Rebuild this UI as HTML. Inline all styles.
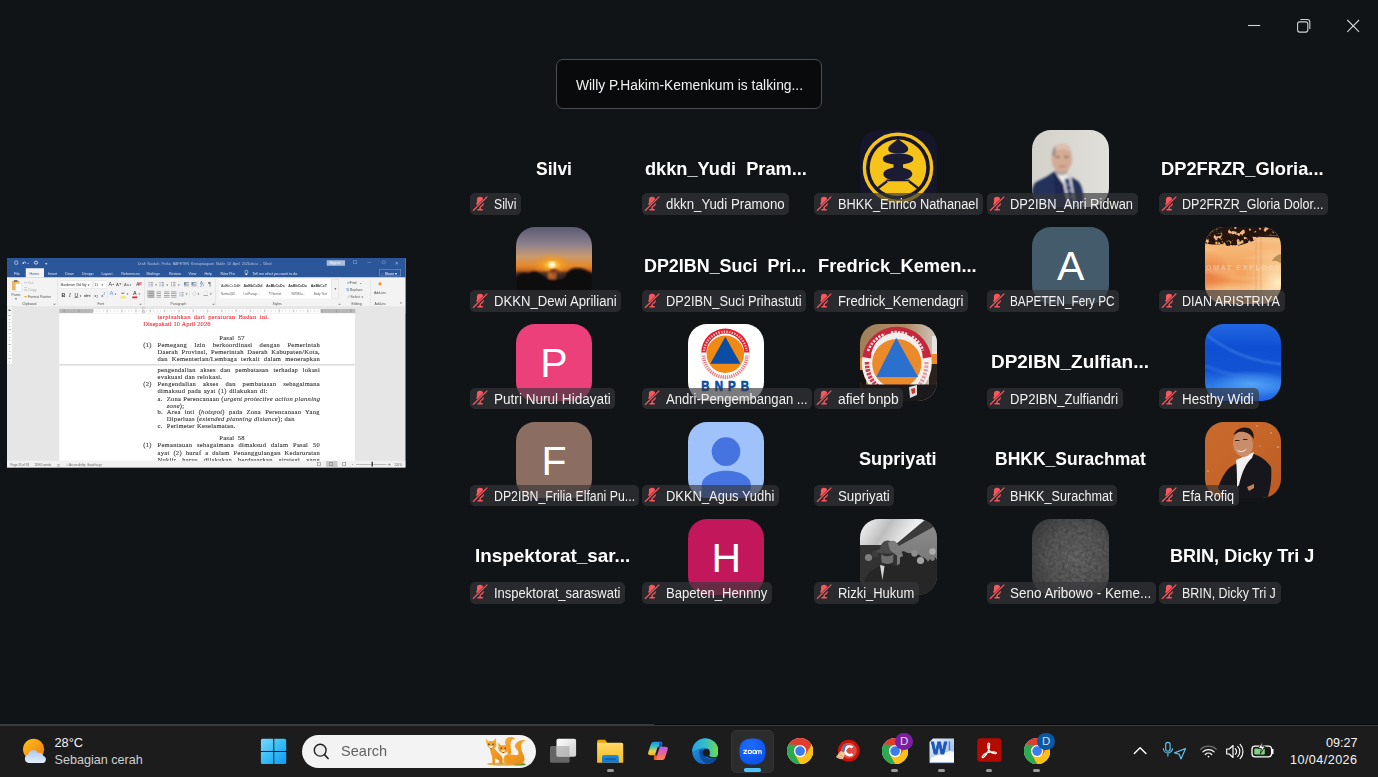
<!DOCTYPE html>
<html><head><meta charset="utf-8"><title>Zoom Meeting</title>
<style>
html,body{margin:0;padding:0}
body{width:1378px;height:777px;overflow:hidden;background:#111417;font-family:"Liberation Sans",sans-serif;position:relative;color:#fff}
.abs{position:absolute}
.av{position:absolute;width:76.500px;height:76.500px;border-radius:19px;overflow:hidden}
.av svg{display:block}
.lb{position:absolute;height:21.7px;border-radius:5px;background:rgba(54,55,57,.66);box-sizing:border-box;white-space:nowrap;overflow:hidden}
.lb .mic{position:absolute;left:0;top:-.5px}
.lb span{position:absolute;left:23.7px;top:0;line-height:22.300px;font-size:14px;color:#f1f1f1;transform-origin:0 50%;white-space:pre}
.nm{position:absolute;height:28px;white-space:nowrap}
.nm span{position:absolute;left:0;top:0;line-height:28px;font-size:18.5px;font-weight:700;color:#fff;transform-origin:0 50%;white-space:pre}
.toast{position:absolute;left:556px;top:59px;width:266px;height:50px;box-sizing:border-box;border:1px solid #4b4d50;border-radius:7px;background:#090a0b}
.toast span{position:absolute;left:18.5px;top:0;line-height:51.600px;font-size:14px;color:#f2f2f2;white-space:pre;transform-origin:0 50%;transform:scaleX(.987)}
</style></head><body>
<!-- window controls -->
<svg class="abs" style="left:1240px;top:10px" width="130" height="30" viewBox="0 0 130 30">
 <path d="M8 15.5h12.2" stroke="#d2d2d2" stroke-width="1.1" fill="none"/>
 <rect x="57.6" y="11.9" width="10.2" height="10.2" rx="2" fill="none" stroke="#d2d2d2" stroke-width="1.1"/>
 <path d="M60.4 9.5h6.8a2.6 2.6 0 0 1 2.6 2.6v6.9" fill="none" stroke="#d2d2d2" stroke-width="1.1"/>
 <path d="M107.3 10l11.8 11.8M119.1 10l-11.8 11.8" stroke="#d2d2d2" stroke-width="1.1" fill="none"/>
</svg>
<div class="toast"><span id="toastt">Willy P.Hakim-Kemenkum is talking...</span></div>
<div id="word" style="position:absolute;left:6.500px;top:257.700px;width:1594px;height:838px;transform:scale(.25);transform-origin:0 0;background:#e6e6e6;overflow:hidden;font-family:'Liberation Sans',sans-serif;color:#444">
<style>#word div,#word span,#word i,#word b{position:absolute;white-space:pre}#word .t{font-size:14.500px;line-height:24px;color:#fff;opacity:.85}#word .r{font-size:14px;line-height:24px;color:#555}#word .ln{font-family:"Liberation Serif",serif;font-size:26px;line-height:30px;color:#222;text-align:justify;text-align-last:justify;white-space:nowrap;letter-spacing:1.200px;font-weight:400;-webkit-text-stroke:.55px #222;opacity:.88}#word .ln i{position:static;font-weight:400}#word .sep{width:2px;background:#d8d8d8}</style>
<div style="left:0;top:0;width:1594px;height:78px;background:#2b569a"></div>
<div style="left:30px;top:11px;width:14px;height:15px;border:2.500px solid #fff;box-sizing:border-box;border-radius:2px"></div>
<div class="t" style="left:58px;top:8px;font-size:20px;opacity:1">&#8630; -</div>
<div style="left:108px;top:11px;width:16px;height:15px;border:3px solid #fff;box-sizing:border-box;border-radius:8px"></div>
<div class="t" style="left:150px;top:9px;font-size:14px">&#9660;</div>
<div class="t" style="left:524px;top:10px;width:534px;text-align:justify;text-align-last:justify;white-space:nowrap;opacity:.62;font-size:14px">Draft Naskah Perka BAPETEN Kesiapsiagaan Nuklir 10 April 2026.docx - Word</div>
<div style="left:1279px;top:9px;width:73px;height:22px;background:#a9bddc"></div><div class="t" style="left:1292px;top:9px;font-size:13.500px;opacity:1">Sign in</div>
<div style="left:1384px;top:10px;width:16px;height:14px;border:2px solid #8ea4cf;box-sizing:border-box"></div>
<div style="left:1442px;top:18px;width:14px;height:2px;background:#8ea4cf"></div>
<div style="left:1500px;top:10px;width:14px;height:14px;border:2px solid #8ea4cf;box-sizing:border-box;border-radius:4px"></div>
<div class="t" style="left:1552px;top:6px;font-size:24px;opacity:.6">&#215;</div>
<div style="left:75px;top:41px;width:73px;height:37px;background:#f3f3f3"></div>
<div class="t" style="left:28px;top:50px">File</div>
<div class="t" style="left:164px;top:50px">Insert</div>
<div class="t" style="left:233px;top:50px">Draw</div>
<div class="t" style="left:301px;top:50px">Design</div>
<div class="t" style="left:378px;top:50px">Layout</div>
<div class="t" style="left:457px;top:50px">References</div>
<div class="t" style="left:558px;top:50px">Mailings</div>
<div class="t" style="left:648px;top:50px">Review</div>
<div class="t" style="left:726px;top:50px">View</div>
<div class="t" style="left:790px;top:50px">Help</div>
<div class="t" style="left:854px;top:50px">Nitro Pro</div>
<div class="t" style="left:982px;top:50px">Tell me what you want to do</div>
<div class="t" style="left:90px;top:50px;color:#2b569a;opacity:.9">Home</div>
<div style="left:951px;top:48px;width:13px;height:15px;border:2.500px solid #fff;border-radius:8px 8px 5px 5px;box-sizing:border-box"></div><div style="left:954px;top:64px;width:7px;height:4px;background:#fff"></div>
<div style="left:1490px;top:45px;width:86px;height:28px;border:2px solid #8fa6cf;box-sizing:border-box"></div><div class="t" style="left:1498px;top:50px;opacity:1">&#9676; Share &#9662;</div>
<div style="left:0;top:78px;width:1594px;height:116px;background:#f3f3f3"></div>
<div style="left:20px;top:91px;width:30px;height:38px;background:#e8b765;border-radius:3px"></div><div style="left:34px;top:102px;width:22px;height:30px;background:#fdfdfd;border:1px solid #bbb"></div><div style="left:28px;top:88px;width:14px;height:8px;background:#777;border-radius:2px"></div>
<div class="r" style="left:18px;top:133px">Paste</div><div class="r" style="left:30px;top:151px;font-size:12px">&#9660;</div>
<div class="r" style="left:68px;top:87px;color:#aaa">&#9986; Cut</div><div class="r" style="left:68px;top:115px;color:#aaa">&#9782; Copy</div><div class="r" style="left:68px;top:144px"><span style="position:static;color:#e6a11a">&#10002;</span> Format Painter</div>
<div class="r" style="left:60px;top:172px;font-size:13.500px">Clipboard</div><div class="r" style="left:184px;top:172px;font-size:12px">&#8690;</div>
<div class="sep" style="left:200px;top:85px;height:104px"></div>
<div style="left:212px;top:91px;width:129px;height:30px;background:#fff;border:1.500px solid #c6c6c6;box-sizing:border-box"></div><div class="r" style="left:216px;top:94px;font-size:13.500px;color:#333;letter-spacing:-.2px">Bookman Old Sty<span style="position:static;font-size:11px"> &#9660;</span></div>
<div style="left:346px;top:91px;width:53px;height:30px;background:#fff;border:1.500px solid #c6c6c6;box-sizing:border-box"></div><div class="r" style="left:350px;top:94px;font-size:13.500px;color:#333">11<span style="position:static;font-size:11px">    &#9660;</span></div>
<div class="r" style="left:406px;top:92px;font-size:21px;color:#444">A<span style="position:static;font-size:10px;vertical-align:top">&#9650;</span> <span style="position:static;font-size:17px">A</span><span style="position:static;font-size:12px;vertical-align:top">&#9660;</span></div>
<div class="sep" style="left:461px;top:91px;height:30px"></div>
<div class="r" style="left:468px;top:93px;font-size:16px">Aa<span style="position:static;font-size:11px">&#9660;</span></div>
<div style="left:522px;top:97px;width:16px;height:12px;background:#ee7d93;transform:skewX(-25deg)"></div><div class="r" style="left:516px;top:91px;font-size:20px;color:#666">A</div>
<div class="r" style="left:218px;top:132px;font-size:21px;color:#333;letter-spacing:1px"><b style="position:static">B</b>  <i style="position:static;font-family:'Liberation Serif'">I</i>  <span style="position:static;text-decoration:underline">U</span><span style="position:static;font-size:10px"> &#9660;  </span><span style="position:static;font-size:15px;text-decoration:line-through">abc</span>  <span style="position:static;font-size:17px">x<sub style="font-size:11px;color:#2b569a">2</sub>  x<sup style="font-size:11px;color:#2b569a">2</sup></span></div>
<div class="sep" style="left:400px;top:131px;height:30px"></div>
<div class="r" style="left:410px;top:130px;font-size:22px;color:#7ea6e0;font-weight:700">A<span style="position:static;font-size:10px;color:#555"> &#9660;</span></div>
<div style="left:455px;top:154px;width:20px;height:7px;background:#ffec00"></div><div class="r" style="left:456px;top:128px;font-size:18px;color:#777">&#10002;<span style="position:static;font-size:10px;color:#555">  &#9660;</span></div>
<div style="left:501px;top:154px;width:20px;height:7px;background:#e8202a"></div><div class="r" style="left:504px;top:128px;font-size:20px;color:#444;font-weight:700">A<span style="position:static;font-size:10px;color:#555;font-weight:400">  &#9660;</span></div>
<div class="r" style="left:362px;top:172px;font-size:13.500px">Font</div><div class="r" style="left:528px;top:172px;font-size:12px">&#8690;</div>
<div class="sep" style="left:550px;top:85px;height:104px"></div>
<div style="left:574px;top:96px;width:10px;height:2.500px;background:#8c8c8c"></div><div style="left:566px;top:96px;width:4px;height:3px;background:#5b86c4"></div><div style="left:574px;top:103px;width:10px;height:2.500px;background:#8c8c8c"></div><div style="left:566px;top:103px;width:4px;height:3px;background:#5b86c4"></div><div style="left:574px;top:110px;width:10px;height:2.500px;background:#8c8c8c"></div><div style="left:566px;top:110px;width:4px;height:3px;background:#5b86c4"></div>
<div class="r" style="left:591px;top:95px;font-size:11px">&#9660;</div>
<div style="left:618px;top:96px;width:10px;height:2.500px;background:#8c8c8c"></div><div style="left:610px;top:96px;width:4px;height:3px;background:#5b86c4"></div><div style="left:618px;top:103px;width:10px;height:2.500px;background:#8c8c8c"></div><div style="left:610px;top:103px;width:4px;height:3px;background:#5b86c4"></div><div style="left:618px;top:110px;width:10px;height:2.500px;background:#8c8c8c"></div><div style="left:610px;top:110px;width:4px;height:3px;background:#5b86c4"></div>
<div class="r" style="left:636px;top:95px;font-size:11px">&#9660;</div>
<div style="left:664px;top:96px;width:10px;height:2.500px;background:#8c8c8c"></div><div style="left:656px;top:96px;width:4px;height:3px;background:#5b86c4"></div><div style="left:664px;top:103px;width:10px;height:2.500px;background:#8c8c8c"></div><div style="left:656px;top:103px;width:4px;height:3px;background:#5b86c4"></div><div style="left:664px;top:110px;width:10px;height:2.500px;background:#8c8c8c"></div><div style="left:656px;top:110px;width:4px;height:3px;background:#5b86c4"></div>
<div class="r" style="left:682px;top:95px;font-size:11px">&#9660;</div>
<div style="left:708px;top:96px;width:20px;height:2.500px;background:#8c8c8c"></div><div style="left:708px;top:103px;width:20px;height:2.500px;background:#8c8c8c"></div><div style="left:708px;top:110px;width:20px;height:2.500px;background:#8c8c8c"></div>
<div style="left:708px;top:98px;width:7px;height:9px;background:#5b86c4"></div>
<div style="left:738px;top:96px;width:20px;height:2.500px;background:#8c8c8c"></div><div style="left:738px;top:103px;width:20px;height:2.500px;background:#8c8c8c"></div><div style="left:738px;top:110px;width:20px;height:2.500px;background:#8c8c8c"></div>
<div style="left:738px;top:98px;width:7px;height:9px;background:#5b86c4"></div>
<div class="sep" style="left:762px;top:91px;height:30px"></div>
<div class="r" style="left:772px;top:92px;font-size:17px;line-height:13px;color:#5b86c4;white-space:pre">A
Z</div><div class="r" style="left:780px;top:93px;font-size:22px;color:#666">&#8595;</div>
<div class="r" style="left:804px;top:91px;font-size:24px;color:#555">&#182;</div>
<div style="left:560px;top:129px;width:30px;height:30px;background:#c5c5c5"></div>
<div style="left:566px;top:134px;width:22px;height:2.500px;background:#8c8c8c"></div><div style="left:566px;top:141px;width:22px;height:2.500px;background:#8c8c8c"></div><div style="left:566px;top:148px;width:22px;height:2.500px;background:#8c8c8c"></div><div style="left:566px;top:155px;width:22px;height:2.500px;background:#8c8c8c"></div>
<div style="left:598px;top:134px;width:18px;height:2.500px;background:#8c8c8c"></div><div style="left:598px;top:141px;width:18px;height:2.500px;background:#8c8c8c"></div><div style="left:598px;top:148px;width:18px;height:2.500px;background:#8c8c8c"></div><div style="left:598px;top:155px;width:18px;height:2.500px;background:#8c8c8c"></div>
<div style="left:628px;top:134px;width:22px;height:2.500px;background:#8c8c8c"></div><div style="left:628px;top:141px;width:22px;height:2.500px;background:#8c8c8c"></div><div style="left:628px;top:148px;width:22px;height:2.500px;background:#8c8c8c"></div><div style="left:628px;top:155px;width:22px;height:2.500px;background:#8c8c8c"></div>
<div style="left:656px;top:134px;width:22px;height:2.500px;background:#8c8c8c"></div><div style="left:656px;top:141px;width:22px;height:2.500px;background:#8c8c8c"></div><div style="left:656px;top:148px;width:22px;height:2.500px;background:#8c8c8c"></div><div style="left:656px;top:155px;width:22px;height:2.500px;background:#8c8c8c"></div>
<div style="left:698px;top:136px;width:8px;height:2.500px;background:#8c8c8c"></div><div style="left:690px;top:136px;width:4px;height:3px;background:#5b86c4"></div><div style="left:698px;top:143px;width:8px;height:2.500px;background:#8c8c8c"></div><div style="left:690px;top:143px;width:4px;height:3px;background:#5b86c4"></div><div style="left:698px;top:150px;width:8px;height:2.500px;background:#8c8c8c"></div><div style="left:690px;top:150px;width:4px;height:3px;background:#5b86c4"></div>
<div class="r" style="left:713px;top:133px;font-size:11px">&#9660;</div>
<div class="sep" style="left:728px;top:131px;height:30px"></div>
<div class="r" style="left:740px;top:129px;font-size:22px;color:#9bb4d8">&#9671;<span style="position:static;font-size:11px;color:#555"> &#9660;</span></div>
<div style="left:786px;top:134px;width:18px;height:16px;border:1.500px dotted #999;border-bottom:2px solid #666;box-sizing:border-box"></div><div class="r" style="left:810px;top:133px;font-size:11px">&#9660;</div>
<div class="r" style="left:654px;top:172px;font-size:13.500px">Paragraph</div><div class="r" style="left:818px;top:172px;font-size:12px">&#8690;</div>
<div class="sep" style="left:834px;top:85px;height:104px"></div>
<div style="left:850px;top:86px;width:446px;height:76px;background:#fff"></div>
<div class="r" style="left:856px;top:100px;font-size:14px;color:#333;font-weight:400;letter-spacing:0">AaBbCcDdE</div>
<div class="r" style="left:856px;top:132px;font-size:12px;color:#666">Normal(W...</div>
<div class="r" style="left:946px;top:100px;font-size:14.5px;color:#333;font-weight:700;letter-spacing:0">AaBbCcDd</div>
<div class="r" style="left:946px;top:132px;font-size:12px;color:#666">ListParagr...</div>
<div class="r" style="left:1036px;top:100px;font-size:14.5px;color:#333;font-weight:700;letter-spacing:0">AaBbCcDc</div>
<div class="r" style="left:1048px;top:132px;font-size:12px;color:#666">¶ Normal</div>
<div class="r" style="left:1125px;top:100px;font-size:14.5px;color:#333;font-weight:700;letter-spacing:0">AaBbCcDc</div>
<div class="r" style="left:1137px;top:132px;font-size:12px;color:#666">WW8Nu...</div>
<div class="r" style="left:1215px;top:100px;font-size:14.5px;color:#333;font-weight:700;letter-spacing:0">AaBbCcT</div>
<div class="r" style="left:1227px;top:132px;font-size:12px;color:#666">Body Text</div>
<div style="left:1299px;top:86px;width:29px;height:76px;border:1.500px solid #c6c6c6;box-sizing:border-box"></div><div class="r" style="left:1307px;top:110px;font-size:13px">&#9660;</div>
<div class="r" style="left:1062px;top:172px;font-size:13.500px">Styles</div><div class="r" style="left:1324px;top:172px;font-size:12px">&#8690;</div>
<div class="r" style="left:1358px;top:87px"><span style="position:static;color:#5b86c4">&#9740;</span> Find   &#8964;</div><div class="r" style="left:1355px;top:116px"><span style="position:static;color:#5b86c4">&#8645;</span> Replace</div><div class="r" style="left:1358px;top:144px"><span style="position:static;color:#999">&#8599;</span> Select<span style="position:static;font-size:11px"> &#9660;</span></div>
<div class="r" style="left:1378px;top:172px;font-size:13.500px">Editing</div>
<div class="sep" style="left:1452px;top:85px;height:104px"></div>
<div style="left:1486px;top:97px;width:12px;height:12px;border-radius:6px;background:#f58a1f"></div>
<div class="r" style="left:1468px;top:128px">Add-ins</div><div class="r" style="left:1470px;top:172px;font-size:13.500px">Add-ins</div>
<div class="r" style="left:1568px;top:174px;font-size:18px">&#8963;</div>
<div style="left:0;top:194px;width:1594px;height:28px;background:#e6e6e6"></div>
<div style="left:0;top:194px;width:24px;height:28px;background:#f3f3f3;border:1px solid #ccc;box-sizing:border-box"></div><div style="left:7px;top:204px;width:8px;height:8px;border-left:3px solid #555;border-bottom:3px solid #555;box-sizing:border-box"></div>
<div style="left:209px;top:204px;width:1183px;height:16px;background:#fdfdfd"></div>
<div style="left:209px;top:204px;width:134px;height:16px;background:#b9b9b9"></div>
<div style="left:1254px;top:204px;width:139px;height:16px;background:#b9b9b9"></div>
<div style="left:226px;top:206px;width:6px;height:11px;background:#666;opacity:.3"></div><div style="left:241px;top:208px;width:3px;height:7px;background:#888;opacity:.3"></div><div style="left:255px;top:208px;width:3px;height:7px;background:#888;opacity:.3"></div><div style="left:269px;top:208px;width:3px;height:7px;background:#888;opacity:.3"></div><div style="left:284px;top:206px;width:6px;height:11px;background:#666;opacity:.3"></div><div style="left:298px;top:208px;width:3px;height:7px;background:#888;opacity:.3"></div><div style="left:312px;top:208px;width:3px;height:7px;background:#888;opacity:.3"></div><div style="left:327px;top:208px;width:3px;height:7px;background:#888;opacity:.3"></div><div style="left:341px;top:206px;width:6px;height:11px;background:#666;opacity:.3"></div><div style="left:355px;top:208px;width:3px;height:7px;background:#888;opacity:.3"></div><div style="left:370px;top:208px;width:3px;height:7px;background:#888;opacity:.3"></div><div style="left:384px;top:208px;width:3px;height:7px;background:#888;opacity:.3"></div><div style="left:398px;top:206px;width:6px;height:11px;background:#666;opacity:.3"></div><div style="left:413px;top:208px;width:3px;height:7px;background:#888;opacity:.3"></div><div style="left:427px;top:208px;width:3px;height:7px;background:#888;opacity:.3"></div><div style="left:441px;top:208px;width:3px;height:7px;background:#888;opacity:.3"></div><div style="left:456px;top:206px;width:6px;height:11px;background:#666;opacity:.3"></div><div style="left:470px;top:208px;width:3px;height:7px;background:#888;opacity:.3"></div><div style="left:484px;top:208px;width:3px;height:7px;background:#888;opacity:.3"></div><div style="left:498px;top:208px;width:3px;height:7px;background:#888;opacity:.3"></div><div style="left:513px;top:206px;width:6px;height:11px;background:#666;opacity:.3"></div><div style="left:527px;top:208px;width:3px;height:7px;background:#888;opacity:.3"></div><div style="left:541px;top:208px;width:3px;height:7px;background:#888;opacity:.3"></div><div style="left:556px;top:208px;width:3px;height:7px;background:#888;opacity:.3"></div><div style="left:570px;top:206px;width:6px;height:11px;background:#666;opacity:.3"></div><div style="left:584px;top:208px;width:3px;height:7px;background:#888;opacity:.3"></div><div style="left:599px;top:208px;width:3px;height:7px;background:#888;opacity:.3"></div><div style="left:613px;top:208px;width:3px;height:7px;background:#888;opacity:.3"></div><div style="left:627px;top:206px;width:6px;height:11px;background:#666;opacity:.3"></div><div style="left:642px;top:208px;width:3px;height:7px;background:#888;opacity:.3"></div><div style="left:656px;top:208px;width:3px;height:7px;background:#888;opacity:.3"></div><div style="left:670px;top:208px;width:3px;height:7px;background:#888;opacity:.3"></div><div style="left:685px;top:206px;width:6px;height:11px;background:#666;opacity:.3"></div><div style="left:699px;top:208px;width:3px;height:7px;background:#888;opacity:.3"></div><div style="left:713px;top:208px;width:3px;height:7px;background:#888;opacity:.3"></div><div style="left:728px;top:208px;width:3px;height:7px;background:#888;opacity:.3"></div><div style="left:742px;top:206px;width:6px;height:11px;background:#666;opacity:.3"></div><div style="left:756px;top:208px;width:3px;height:7px;background:#888;opacity:.3"></div><div style="left:771px;top:208px;width:3px;height:7px;background:#888;opacity:.3"></div><div style="left:785px;top:208px;width:3px;height:7px;background:#888;opacity:.3"></div><div style="left:799px;top:206px;width:6px;height:11px;background:#666;opacity:.3"></div><div style="left:814px;top:208px;width:3px;height:7px;background:#888;opacity:.3"></div><div style="left:828px;top:208px;width:3px;height:7px;background:#888;opacity:.3"></div><div style="left:842px;top:208px;width:3px;height:7px;background:#888;opacity:.3"></div><div style="left:856px;top:206px;width:6px;height:11px;background:#666;opacity:.3"></div><div style="left:871px;top:208px;width:3px;height:7px;background:#888;opacity:.3"></div><div style="left:885px;top:208px;width:3px;height:7px;background:#888;opacity:.3"></div><div style="left:899px;top:208px;width:3px;height:7px;background:#888;opacity:.3"></div><div style="left:914px;top:206px;width:6px;height:11px;background:#666;opacity:.3"></div><div style="left:928px;top:208px;width:3px;height:7px;background:#888;opacity:.3"></div><div style="left:942px;top:208px;width:3px;height:7px;background:#888;opacity:.3"></div><div style="left:957px;top:208px;width:3px;height:7px;background:#888;opacity:.3"></div><div style="left:971px;top:206px;width:6px;height:11px;background:#666;opacity:.3"></div><div style="left:985px;top:208px;width:3px;height:7px;background:#888;opacity:.3"></div><div style="left:1000px;top:208px;width:3px;height:7px;background:#888;opacity:.3"></div><div style="left:1014px;top:208px;width:3px;height:7px;background:#888;opacity:.3"></div><div style="left:1028px;top:206px;width:6px;height:11px;background:#666;opacity:.3"></div><div style="left:1043px;top:208px;width:3px;height:7px;background:#888;opacity:.3"></div><div style="left:1057px;top:208px;width:3px;height:7px;background:#888;opacity:.3"></div><div style="left:1071px;top:208px;width:3px;height:7px;background:#888;opacity:.3"></div><div style="left:1086px;top:206px;width:6px;height:11px;background:#666;opacity:.3"></div><div style="left:1100px;top:208px;width:3px;height:7px;background:#888;opacity:.3"></div><div style="left:1114px;top:208px;width:3px;height:7px;background:#888;opacity:.3"></div><div style="left:1129px;top:208px;width:3px;height:7px;background:#888;opacity:.3"></div><div style="left:1143px;top:206px;width:6px;height:11px;background:#666;opacity:.3"></div><div style="left:1157px;top:208px;width:3px;height:7px;background:#888;opacity:.3"></div><div style="left:1172px;top:208px;width:3px;height:7px;background:#888;opacity:.3"></div><div style="left:1186px;top:208px;width:3px;height:7px;background:#888;opacity:.3"></div><div style="left:1200px;top:206px;width:6px;height:11px;background:#666;opacity:.3"></div><div style="left:1214px;top:208px;width:3px;height:7px;background:#888;opacity:.3"></div><div style="left:1229px;top:208px;width:3px;height:7px;background:#888;opacity:.3"></div><div style="left:1243px;top:208px;width:3px;height:7px;background:#888;opacity:.3"></div><div style="left:1257px;top:206px;width:6px;height:11px;background:#666;opacity:.3"></div><div style="left:1272px;top:208px;width:3px;height:7px;background:#888;opacity:.3"></div><div style="left:1286px;top:208px;width:3px;height:7px;background:#888;opacity:.3"></div><div style="left:1300px;top:208px;width:3px;height:7px;background:#888;opacity:.3"></div><div style="left:1315px;top:206px;width:6px;height:11px;background:#666;opacity:.3"></div><div style="left:1329px;top:208px;width:3px;height:7px;background:#888;opacity:.3"></div><div style="left:1343px;top:208px;width:3px;height:7px;background:#888;opacity:.3"></div><div style="left:1358px;top:208px;width:3px;height:7px;background:#888;opacity:.3"></div><div style="left:1372px;top:206px;width:6px;height:11px;background:#666;opacity:.3"></div>
<div style="left:541px;top:196px;width:9px;height:9px;background:#ddd;border:1.500px solid #888;box-sizing:border-box;transform:rotate(45deg)"></div><div style="left:540px;top:210px;width:11px;height:11px;background:#ddd;border:1.500px solid #888;box-sizing:border-box"></div>
<div style="left:0;top:222px;width:22px;height:589px;background:#e6e6e6"></div>
<div style="left:2px;top:222px;width:18px;height:202px;background:#fcfcfc"></div>
<div style="left:5px;top:229px;width:11px;height:3px;background:#888;opacity:.7"></div><div style="left:8px;top:244px;width:5px;height:3px;background:#888;opacity:.7"></div><div style="left:8px;top:258px;width:5px;height:3px;background:#888;opacity:.7"></div><div style="left:8px;top:272px;width:5px;height:3px;background:#888;opacity:.7"></div><div style="left:5px;top:286px;width:11px;height:3px;background:#888;opacity:.7"></div><div style="left:8px;top:301px;width:5px;height:3px;background:#888;opacity:.7"></div><div style="left:8px;top:315px;width:5px;height:3px;background:#888;opacity:.7"></div><div style="left:8px;top:329px;width:5px;height:3px;background:#888;opacity:.7"></div><div style="left:5px;top:344px;width:11px;height:3px;background:#888;opacity:.7"></div><div style="left:8px;top:358px;width:5px;height:3px;background:#888;opacity:.7"></div><div style="left:8px;top:372px;width:5px;height:3px;background:#888;opacity:.7"></div><div style="left:8px;top:387px;width:5px;height:3px;background:#888;opacity:.7"></div><div style="left:5px;top:401px;width:11px;height:3px;background:#888;opacity:.7"></div><div style="left:8px;top:415px;width:5px;height:3px;background:#888;opacity:.7"></div>
<div style="left:209px;top:222px;width:1183px;height:589px;background:#fff"></div>
<div style="left:209px;top:426px;width:1183px;height:3px;background:#b8b8b8"></div>
<div class="ln" style="left:602px;top:222px;width:447px;color:#e8202a;-webkit-text-stroke-color:#e8202a;">terpisahkan dari peraturan Badan ini.</div>
<div class="ln" style="left:545px;top:249px;width:269px;color:#e8202a;letter-spacing:.2px;-webkit-text-stroke-color:#e8202a;">Disepakati 10 April 2026</div>
<div class="ln" style="left:849px;top:305px;width:102px;">Pasal 57</div>
<div class="ln" style="left:545px;top:333px;width:29px;">(1)</div>
<div class="ln" style="left:602px;top:333px;width:650px;">Pemegang Izin berkoordinasi dengan Pemerintah</div>
<div class="ln" style="left:602px;top:361px;width:650px;">Daerah Provinsi, Pemerintah Daerah Kabupaten/Kota,</div>
<div class="ln" style="left:602px;top:390px;width:650px;">dan Kementerian/Lembaga terkait dalam menerapkan</div>
<div class="ln" style="left:602px;top:433px;width:650px;">pengendalian akses dan pembatasan terhadap lokasi</div>
<div class="ln" style="left:602px;top:461px;width:259px;">evakuasi dan relokasi.</div>
<div class="ln" style="left:545px;top:490px;width:29px;">(2)</div>
<div class="ln" style="left:602px;top:490px;width:650px;">Pengendalian akses dan pembatasan sebagaimana</div>
<div class="ln" style="left:602px;top:518px;width:441px;">dimaksud pada ayat (1) dilakukan di:</div>
<div class="ln" style="left:602px;top:547px;width:20px;">a.</div>
<div class="ln" style="left:639px;top:547px;width:612px;">Zona Perencanaan (<i>urgent protective action planning</i></div>
<div class="ln" style="left:639px;top:575px;width:66px;"><i>zone</i>);</div>
<div class="ln" style="left:602px;top:601px;width:20px;">b.</div>
<div class="ln" style="left:639px;top:601px;width:612px;">Area inti (<i>hotspot</i>) pada Zona Perencanaan Yang</div>
<div class="ln" style="left:639px;top:630px;width:511px;">Diperluas (<i>extended planning distance</i>); dan</div>
<div class="ln" style="left:602px;top:658px;width:20px;">c.</div>
<div class="ln" style="left:639px;top:658px;width:276px;">Perimeter Keselamatan.</div>
<div class="ln" style="left:849px;top:705px;width:102px;">Pasal 58</div>
<div class="ln" style="left:545px;top:734px;width:29px;">(1)</div>
<div class="ln" style="left:602px;top:734px;width:650px;">Pemantauan sebagaimana dimaksud dalam Pasal 50</div>
<div class="ln" style="left:602px;top:763px;width:650px;">ayat (2) huruf a dalam Penanggulangan Kedaruratan</div>
<div class="ln" style="left:602px;top:792px;width:650px;">Nuklir harus dilakukan berdasarkan strategi yang</div>
<div style="left:0;top:811px;width:1594px;height:28px;background:#f1f1f1"></div>
<div class="r" style="left:14px;top:814px;font-size:12px;color:#666">Page 35 of 58      11965 words       &#9707;       &#9737; Accessibility: Good to go</div>
<div style="left:1276px;top:812px;width:46px;height:25px;background:#c9c9c9"></div>
<div style="left:1240px;top:817px;width:14px;height:15px;border:2px solid #777;box-sizing:border-box"></div>
<div style="left:1290px;top:817px;width:14px;height:15px;border:2px solid #777;box-sizing:border-box"></div>
<div style="left:1342px;top:817px;width:14px;height:15px;border:2px solid #777;box-sizing:border-box"></div>
<div style="left:1396px;top:824px;width:122px;height:2px;background:#888"></div><div style="left:1458px;top:815px;width:6px;height:19px;background:#444"></div>
<div class="r" style="left:1379px;top:813px;font-size:19px;color:#666">-</div><div class="r" style="left:1524px;top:813px;font-size:19px;color:#666">+</div><div class="r" style="left:1549px;top:814px;font-size:12px;color:#666">120%</div>
</div>
<div class="nm" style="left:535.5px;top:154.65px"><span style="transform:scaleX(0.9458)">Silvi</span></div>
<div class="lb" style="left:470px;top:193.20px;width:50.7px"><svg class="mic" width="20" height="21" viewBox="0 0 20 21"><rect x="6.9" y="3.8" width="6.3" height="9.6" rx="3.1" fill="#f9575e"/><path d="M6.6 10.2a3.5 3.5 0 0 0 7 0" fill="none" stroke="#f9575e" stroke-width="1"/><rect x="9.3" y="13" width="1.6" height="3.2" fill="#f9575e"/><rect x="7.3" y="15.9" width="5.6" height="1.6" rx=".4" fill="#f9575e"/><path d="M3.6 17.9L17.6 3.9" stroke="#292a2c" stroke-width="2.9"/><path d="M3 17.7L17.3 3.6" stroke="#f9575e" stroke-width="1.25"/></svg><span style="transform:scaleX(0.8726)">Silvi</span></div>
<div class="nm" style="left:644.5px;top:154.65px"><span style="transform:scaleX(0.9841)">dkkn_Yudi  Pram...</span></div>
<div class="lb" style="left:642px;top:193.20px;width:147.0px"><svg class="mic" width="20" height="21" viewBox="0 0 20 21"><rect x="6.9" y="3.8" width="6.3" height="9.6" rx="3.1" fill="#f9575e"/><path d="M6.6 10.2a3.5 3.5 0 0 0 7 0" fill="none" stroke="#f9575e" stroke-width="1"/><rect x="9.3" y="13" width="1.6" height="3.2" fill="#f9575e"/><rect x="7.3" y="15.9" width="5.6" height="1.6" rx=".4" fill="#f9575e"/><path d="M3.6 17.9L17.6 3.9" stroke="#292a2c" stroke-width="2.9"/><path d="M3 17.7L17.3 3.6" stroke="#f9575e" stroke-width="1.25"/></svg><span style="transform:scaleX(0.9472)">dkkn_Yudi Pramono</span></div>
<div class="av" style="left:860.0px;top:130.00px"><svg width="77" height="77" viewBox="0 0 77 77"><rect width="77" height="77" fill="#15162b"/>
<circle cx="38" cy="37.8" r="33.6" fill="none" stroke="#f6c318" stroke-width="3.4"/>
<circle cx="38" cy="37.8" r="28.3" fill="#f6c318"/>
<path d="M38.2 8.300c2.500 4 10 6.500 10 10.800c0 3-3.500 4.100-6 4.100h-8c-2.500 0-6-1.100-6-4.100c0-4.300 7.500-6.800 10-10.800z" fill="#1b1b33"/>
<ellipse cx="38.1" cy="28.900" rx="15.3" ry="5.700" fill="#1b1b33"/>
<rect x="33.500" y="33" width="9.500" height="6" fill="#1b1b33"/>
<ellipse cx="37.8" cy="44" rx="14.5" ry="6.800" fill="#1b1b33"/>
<path d="M27 51.300L17.500 58.500M49 51.300L58.500 58.500" stroke="#1b1b33" stroke-width="2.4"/>
<path d="M26.500 50.400h23" stroke="#1b1b33" stroke-width="1.800"/>
</svg></div>
<div class="lb" style="left:814px;top:193.20px;width:168.6px"><svg class="mic" width="20" height="21" viewBox="0 0 20 21"><rect x="6.9" y="3.8" width="6.3" height="9.6" rx="3.1" fill="#f9575e"/><path d="M6.6 10.2a3.5 3.5 0 0 0 7 0" fill="none" stroke="#f9575e" stroke-width="1"/><rect x="9.3" y="13" width="1.6" height="3.2" fill="#f9575e"/><rect x="7.3" y="15.9" width="5.6" height="1.6" rx=".4" fill="#f9575e"/><path d="M3.6 17.9L17.6 3.9" stroke="#292a2c" stroke-width="2.9"/><path d="M3 17.7L17.3 3.6" stroke="#f9575e" stroke-width="1.25"/></svg><span style="transform:scaleX(0.9151)">BHKK_Enrico Nathanael</span></div>
<div class="av" style="left:1032.3px;top:130.00px"><svg width="77" height="77" viewBox="0 0 77 77"><defs><linearGradient id="anbg" x1="0" y1="0" x2="1" y2="0"><stop offset="0" stop-color="#d3d1c9"/><stop offset="1" stop-color="#e0dfda"/></linearGradient><filter id="b1" x="-.1" y="-.1" width="1.2" height="1.2"><feGaussianBlur stdDeviation=".9"/></filter></defs>
<rect width="77" height="77" fill="url(#anbg)"/>
<g filter="url(#b1)">
<path d="M0 80V60c1-5 3-8 6-9l8-4l9-6l16 6l7 4c3 3 4 7 5 12l1 17z" fill="#23315a"/>
<path d="M22.500 40.500l9 3l7.500 4l5 29.500h-9L30 54z" fill="#eeeeee"/>
<path d="M32.500 49l4.500-1l6.500 29h-5.500z" fill="#35426e"/>
<path d="M35 55l2.500-.5M36.500 61l2.500-.5M38 67l2.500-.5" stroke="#c9cfe6" stroke-width="1"/>
<path d="M21.500 41l10 13l5 23h-12z" fill="#1c2850"/>
<ellipse cx="29.800" cy="29" rx="10.300" ry="13.800" fill="#d4ab94"/>
<path d="M20 26c-1-9 5-13 10-12.500c5 0 9.500 3 9.500 9c-4-4-14-5-17 0z" fill="#dcc0b0"/>
<path d="M20.300 26c-.5-4 1-8 3.500-10l-.8 10z" fill="#8e8985"/>
<path d="M23 38c3 5 10 5 13 0l-1 5.500c-3 2.500-8 2.500-11 0z" fill="#b5a69c"/>
<path d="M23.500 27h4.500M32 27h4.500" stroke="#5b4238" stroke-width="1.100"/>
<path d="M27.500 36.500h6" stroke="#9a6a5c" stroke-width="1.100"/>
</g></svg></div>
<div class="lb" style="left:986.5px;top:193.20px;width:151.3px"><svg class="mic" width="20" height="21" viewBox="0 0 20 21"><rect x="6.9" y="3.8" width="6.3" height="9.6" rx="3.1" fill="#f9575e"/><path d="M6.6 10.2a3.5 3.5 0 0 0 7 0" fill="none" stroke="#f9575e" stroke-width="1"/><rect x="9.3" y="13" width="1.6" height="3.2" fill="#f9575e"/><rect x="7.3" y="15.9" width="5.6" height="1.6" rx=".4" fill="#f9575e"/><path d="M3.6 17.9L17.6 3.9" stroke="#292a2c" stroke-width="2.9"/><path d="M3 17.7L17.3 3.6" stroke="#f9575e" stroke-width="1.25"/></svg><span style="transform:scaleX(0.9190)">DP2IBN_Anri Ridwan</span></div>
<div class="nm" style="left:1160.9px;top:154.65px"><span style="transform:scaleX(0.9885)">DP2FRZR_Gloria...</span></div>
<div class="lb" style="left:1158.5px;top:193.20px;width:169.7px"><svg class="mic" width="20" height="21" viewBox="0 0 20 21"><rect x="6.9" y="3.8" width="6.3" height="9.6" rx="3.1" fill="#f9575e"/><path d="M6.6 10.2a3.5 3.5 0 0 0 7 0" fill="none" stroke="#f9575e" stroke-width="1"/><rect x="9.3" y="13" width="1.6" height="3.2" fill="#f9575e"/><rect x="7.3" y="15.9" width="5.6" height="1.6" rx=".4" fill="#f9575e"/><path d="M3.6 17.9L17.6 3.9" stroke="#292a2c" stroke-width="2.9"/><path d="M3 17.7L17.3 3.6" stroke="#f9575e" stroke-width="1.25"/></svg><span style="transform:scaleX(0.8953)">DP2FRZR_Gloria Dolor...</span></div>
<div class="av" style="left:515.5px;top:227.17px"><svg width="77" height="77" viewBox="0 0 77 77"><defs><linearGradient id="ss1" x1="0" y1="0" x2="0" y2="1"><stop offset="0" stop-color="#5b5a72"/><stop offset=".22" stop-color="#8a7f8c"/><stop offset=".38" stop-color="#c99a72"/><stop offset=".5" stop-color="#e48a2c"/><stop offset=".58" stop-color="#c6601a"/><stop offset=".62" stop-color="#4a2a1c"/><stop offset=".7" stop-color="#140c0b"/><stop offset="1" stop-color="#0b0707"/></linearGradient><radialGradient id="ss2" cx=".47" cy=".49" r=".28" gradientTransform="translate(0 .2) scale(1 .6)"><stop offset="0" stop-color="#fff6c8"/><stop offset=".14" stop-color="#ffd24a"/><stop offset=".45" stop-color="#f5a020" stop-opacity=".7"/><stop offset="1" stop-color="#e88a25" stop-opacity="0"/></radialGradient><filter id="b2"><feGaussianBlur stdDeviation=".8"/></filter></defs>
<rect width="77" height="77" fill="url(#ss1)"/><rect width="77" height="77" fill="url(#ss2)"/>
<g filter="url(#b2)"><rect x="0" y="44.500" width="77" height="8" fill="#3a2a2a" opacity=".75"/>
<rect x="32" y="46" width="8" height="6" fill="#d9762a" opacity=".8"/>
<path d="M0 50c4-4 8-5 12-3c3-3 8-4 11-1c4 2 8 6 12 6c6 1 10 1 14-2c2-6 6-9 12-9c7 0 12 3 16 7v29H0z" fill="#0d0808"/>
<path d="M33.500 44.500c1.500-3 7-3 9 0c-3-.8-6-.8-9 0zM37.700 44v6" fill="#7a1f14" stroke="#7a1f14" stroke-width=".8"/></g>
<circle cx="36" cy="37.700" r="3" fill="#fffbe0" filter="url(#b2)"/></svg></div>
<div class="lb" style="left:470px;top:290.37px;width:151.0px"><svg class="mic" width="20" height="21" viewBox="0 0 20 21"><rect x="6.9" y="3.8" width="6.3" height="9.6" rx="3.1" fill="#f9575e"/><path d="M6.6 10.2a3.5 3.5 0 0 0 7 0" fill="none" stroke="#f9575e" stroke-width="1"/><rect x="9.3" y="13" width="1.6" height="3.2" fill="#f9575e"/><rect x="7.3" y="15.9" width="5.6" height="1.6" rx=".4" fill="#f9575e"/><path d="M3.6 17.9L17.6 3.9" stroke="#292a2c" stroke-width="2.9"/><path d="M3 17.7L17.3 3.6" stroke="#f9575e" stroke-width="1.25"/></svg><span style="transform:scaleX(0.9387)">DKKN_Dewi Apriliani</span></div>
<div class="nm" style="left:644.2px;top:251.55px"><span style="transform:scaleX(0.9678)">DP2IBN_Suci  Pri...</span></div>
<div class="lb" style="left:642px;top:290.37px;width:163.8px"><svg class="mic" width="20" height="21" viewBox="0 0 20 21"><rect x="6.9" y="3.8" width="6.3" height="9.6" rx="3.1" fill="#f9575e"/><path d="M6.6 10.2a3.5 3.5 0 0 0 7 0" fill="none" stroke="#f9575e" stroke-width="1"/><rect x="9.3" y="13" width="1.6" height="3.2" fill="#f9575e"/><rect x="7.3" y="15.9" width="5.6" height="1.6" rx=".4" fill="#f9575e"/><path d="M3.6 17.9L17.6 3.9" stroke="#292a2c" stroke-width="2.9"/><path d="M3 17.7L17.3 3.6" stroke="#f9575e" stroke-width="1.25"/></svg><span style="transform:scaleX(0.9165)">DP2IBN_Suci Prihastuti</span></div>
<div class="nm" style="left:818.4px;top:251.55px"><span style="transform:scaleX(0.9894)">Fredrick_Kemen...</span></div>
<div class="lb" style="left:814px;top:290.37px;width:153.7px"><svg class="mic" width="20" height="21" viewBox="0 0 20 21"><rect x="6.9" y="3.8" width="6.3" height="9.6" rx="3.1" fill="#f9575e"/><path d="M6.6 10.2a3.5 3.5 0 0 0 7 0" fill="none" stroke="#f9575e" stroke-width="1"/><rect x="9.3" y="13" width="1.6" height="3.2" fill="#f9575e"/><rect x="7.3" y="15.9" width="5.6" height="1.6" rx=".4" fill="#f9575e"/><path d="M3.6 17.9L17.6 3.9" stroke="#292a2c" stroke-width="2.9"/><path d="M3 17.7L17.3 3.6" stroke="#f9575e" stroke-width="1.25"/></svg><span style="transform:scaleX(0.9369)">Fredrick_Kemendagri</span></div>
<div class="av" style="left:1032.3px;top:227.17px"><div style="width:77px;height:77px;background:#445b6c;position:relative"><span style="position:absolute;left:0;top:0;width:77px;text-align:center;font-size:41px;line-height:79px;color:#fff">A</span></div></div>
<div class="lb" style="left:986.5px;top:290.37px;width:132.9px"><svg class="mic" width="20" height="21" viewBox="0 0 20 21"><rect x="6.9" y="3.8" width="6.3" height="9.6" rx="3.1" fill="#f9575e"/><path d="M6.6 10.2a3.5 3.5 0 0 0 7 0" fill="none" stroke="#f9575e" stroke-width="1"/><rect x="9.3" y="13" width="1.6" height="3.2" fill="#f9575e"/><rect x="7.3" y="15.9" width="5.6" height="1.6" rx=".4" fill="#f9575e"/><path d="M3.6 17.9L17.6 3.9" stroke="#292a2c" stroke-width="2.9"/><path d="M3 17.7L17.3 3.6" stroke="#f9575e" stroke-width="1.25"/></svg><span style="transform:scaleX(0.8403)">BAPETEN_Fery PC</span></div>
<div class="av" style="left:1204.5px;top:227.17px"><svg width="77" height="77" viewBox="0 0 77 77"><defs><linearGradient id="dn1" x1="0" y1="0" x2="0" y2="1"><stop offset="0" stop-color="#efb27a"/><stop offset=".25" stop-color="#f6b878"/><stop offset=".5" stop-color="#f3a562"/><stop offset=".7" stop-color="#f29a55"/><stop offset=".85" stop-color="#f7c08a"/><stop offset="1" stop-color="#f1a865"/></linearGradient><radialGradient id="dn2" cx=".95" cy=".72" r=".5"><stop offset="0" stop-color="#fff1c8" stop-opacity=".95"/><stop offset="1" stop-color="#fbd9a0" stop-opacity="0"/></radialGradient><radialGradient id="dn3" cx=".05" cy=".62" r=".3"><stop offset="0" stop-color="#e8743a" stop-opacity=".8"/><stop offset="1" stop-color="#e8743a" stop-opacity="0"/></radialGradient><filter id="b4"><feGaussianBlur stdDeviation=".6"/></filter>
<filter id="tree" x="0" y="0" width="1" height="1" color-interpolation-filters="sRGB"><feTurbulence type="fractalNoise" baseFrequency=".22" numOctaves="2" seed="7" result="n"/><feColorMatrix in="n" values="0 0 0 0 .15  0 0 0 0 .08  0 0 0 0 .06  0 0 0 -7 4.700" result="m"/><feComposite in="m" in2="SourceGraphic" operator="in"/><feGaussianBlur stdDeviation=".45"/></filter>
<filter id="streak" x="0" y="0" width="1" height="1" color-interpolation-filters="sRGB"><feTurbulence type="fractalNoise" baseFrequency=".02 .12" numOctaves="2" seed="5"/><feColorMatrix values="0 0 0 0 1  0 0 0 0 .92  0 0 0 0 .75  0 0 0 2.400 -1.100"/></filter></defs>
<rect width="77" height="77" fill="url(#dn1)"/><rect width="77" height="77" fill="url(#dn2)"/><rect width="77" height="77" fill="url(#dn3)"/><rect width="77" height="77" filter="url(#streak)" opacity=".3"/>
<path d="M0 0h66c4 2 8 5 10 9c-8-1-16-1-22 1c-4 2-6 5-12 6c-5 2-10 3.500-13 2c-4 2-9 1-12-1c-5 1-12 1-17-1z" fill="#000" filter="url(#tree)"/>
<g filter="url(#b4)">
<path d="M4 14c8 1 16-1 24-3c10-2 20-3 30-2c6 0 11 0 17 1" stroke="#25130e" stroke-width="1.800" fill="none"/>
<path d="M77 27c-4 0-8 3-10 7c4-1 6 0 10 3z" fill="#8a6a2c" opacity=".6"/>
<path d="M51 12v62M56 10v64" stroke="#c98a5a" stroke-width=".6" opacity=".6"/>
</g>
<text x="-5" y="42.600" font-family="Liberation Sans,sans-serif" font-size="7.300" font-weight="700" letter-spacing="1.500" fill="#f6dfcc" opacity=".55" filter="url(#b4)">TOMAT EXPLORE</text>
</svg></div>
<div class="lb" style="left:1158.5px;top:290.37px;width:126.2px"><svg class="mic" width="20" height="21" viewBox="0 0 20 21"><rect x="6.9" y="3.8" width="6.3" height="9.6" rx="3.1" fill="#f9575e"/><path d="M6.6 10.2a3.5 3.5 0 0 0 7 0" fill="none" stroke="#f9575e" stroke-width="1"/><rect x="9.3" y="13" width="1.6" height="3.2" fill="#f9575e"/><rect x="7.3" y="15.9" width="5.6" height="1.6" rx=".4" fill="#f9575e"/><path d="M3.6 17.9L17.6 3.9" stroke="#292a2c" stroke-width="2.9"/><path d="M3 17.7L17.3 3.6" stroke="#f9575e" stroke-width="1.25"/></svg><span style="transform:scaleX(0.8946)">DIAN ARISTRIYA</span></div>
<div class="av" style="left:515.5px;top:324.33px"><div style="width:77px;height:77px;background:#ec407a;position:relative"><span style="position:absolute;left:0;top:0;width:77px;text-align:center;font-size:41px;line-height:79px;color:#fff">P</span></div></div>
<div class="lb" style="left:470px;top:387.53px;width:145.2px"><svg class="mic" width="20" height="21" viewBox="0 0 20 21"><rect x="6.9" y="3.8" width="6.3" height="9.6" rx="3.1" fill="#f9575e"/><path d="M6.6 10.2a3.5 3.5 0 0 0 7 0" fill="none" stroke="#f9575e" stroke-width="1"/><rect x="9.3" y="13" width="1.6" height="3.2" fill="#f9575e"/><rect x="7.3" y="15.9" width="5.6" height="1.6" rx=".4" fill="#f9575e"/><path d="M3.6 17.9L17.6 3.9" stroke="#292a2c" stroke-width="2.9"/><path d="M3 17.7L17.3 3.6" stroke="#f9575e" stroke-width="1.25"/></svg><span style="transform:scaleX(0.9692)">Putri Nurul Hidayati</span></div>
<div class="av" style="left:687.7px;top:324.33px"><svg width="77" height="77" viewBox="0 0 77 77"><rect width="77" height="77" fill="#fff"/>
<circle cx="37.3" cy="30.200" r="24.300" fill="#fff" stroke="#c9c9c9" stroke-width=".6"/>
<path d="M13.400 28.500a23.900 23.900 0 0 1 47.800 0l-5 0a18.900 18.900 0 0 0-37.800 0z" fill="#e41f2d"/>
<circle cx="37.3" cy="30.200" r="21.600" fill="none" stroke="#e41f2d" stroke-width="4.600" stroke-dasharray="1.100 1" stroke-dashoffset="0" pathLength="120" opacity=".0"/>
<path id="bnarc" d="M15.800 31.500a21.500 21.500 0 0 0 43 0" fill="none" stroke="#ef7a80" stroke-width="3.400" stroke-dasharray="1.300 .9"/>
<path d="M16 27a21.400 21.400 0 0 1 42.600 0" fill="none" stroke="#f6c9cb" stroke-width="2.200" stroke-dasharray="1.400 1.300"/>
<circle cx="37.3" cy="30.200" r="18.700" fill="#f08a12"/>
<path d="M37.300 12.800L52.400 39.700H22.300z" fill="#0b4ca4"/>
<text transform="translate(13.3 67) scale(.8 1)" font-family="Liberation Sans,sans-serif" font-weight="700" font-size="14.300" letter-spacing="6.400" fill="#0b4ca4" stroke="#0b4ca4" stroke-width=".7">BNPB</text>
</svg></div>
<div class="lb" style="left:642px;top:387.53px;width:170.0px"><svg class="mic" width="20" height="21" viewBox="0 0 20 21"><rect x="6.9" y="3.8" width="6.3" height="9.6" rx="3.1" fill="#f9575e"/><path d="M6.6 10.2a3.5 3.5 0 0 0 7 0" fill="none" stroke="#f9575e" stroke-width="1"/><rect x="9.3" y="13" width="1.6" height="3.2" fill="#f9575e"/><rect x="7.3" y="15.9" width="5.6" height="1.6" rx=".4" fill="#f9575e"/><path d="M3.6 17.9L17.6 3.9" stroke="#292a2c" stroke-width="2.9"/><path d="M3 17.7L17.3 3.6" stroke="#f9575e" stroke-width="1.25"/></svg><span style="transform:scaleX(0.9337)">Andri-Pengembangan ...</span></div>
<div class="av" style="left:860.0px;top:324.33px"><svg width="77" height="77" viewBox="0 0 77 77"><defs><filter id="b5"><feGaussianBlur stdDeviation=".6"/></filter><linearGradient id="bp1" x1="0" y1="0" x2="1" y2="0"><stop offset="0" stop-color="#a07e58"/><stop offset=".6" stop-color="#b08c66"/><stop offset="1" stop-color="#cfc8c0"/></linearGradient></defs>
<rect width="77" height="77" fill="url(#bp1)"/>
<rect x="0" y="34" width="6" height="12" fill="#e9892a"/><rect x="0" y="46" width="6" height="20" fill="#17130f"/>
<rect x="70" y="30" width="7" height="10" fill="#e9892a"/><rect x="69" y="40" width="8" height="25" fill="#2a221c"/><rect x="72" y="12" width="5" height="18" fill="#e6e4e0"/>
<g filter="url(#b5)">
<circle cx="36.800" cy="39.500" r="35" fill="#f3efec"/>
<path d="M2.300 33a34.800 34.800 0 0 1 69 0l-8.500 1.500a26 26 0 0 0-52 0z" fill="#c4283a"/>
<circle cx="36.800" cy="39.500" r="24.600" fill="#ea8a2c"/>
<path d="M36.200 13.800L58.100 53H16.300z" fill="#2b6fcc"/>
<path d="M7 38c0 11 4 19 11 25" stroke="#cf3b48" stroke-width="4.500" fill="none" stroke-dasharray="2.400 1.200"/>
<path d="M66.500 38c0 10-3 18-8 24" stroke="#e59aa0" stroke-width="4" fill="none" stroke-dasharray="2.200 1.400"/>
<path d="M8 27c3-8 9-14 17-17M31 8.500c6-1 12 0 17 2M52 12.500c5 3 9 8 11 14" stroke="#f6e4e4" stroke-width="2.600" fill="none" stroke-dasharray="2.200 1.300"/>
</g>
<rect x="0" y="60.500" width="77" height="17" fill="#1a191b"/>
<path d="M49 63l8-2v10l-7 3z" fill="#ddd"/><path d="M51 65l4-1v5l-3 1z" fill="#c33"/>
</svg></div>
<div class="lb" style="left:814px;top:387.53px;width:89.0px"><svg class="mic" width="20" height="21" viewBox="0 0 20 21"><rect x="6.9" y="3.8" width="6.3" height="9.6" rx="3.1" fill="#f9575e"/><path d="M6.6 10.2a3.5 3.5 0 0 0 7 0" fill="none" stroke="#f9575e" stroke-width="1"/><rect x="9.3" y="13" width="1.6" height="3.2" fill="#f9575e"/><rect x="7.3" y="15.9" width="5.6" height="1.6" rx=".4" fill="#f9575e"/><path d="M3.6 17.9L17.6 3.9" stroke="#292a2c" stroke-width="2.9"/><path d="M3 17.7L17.3 3.6" stroke="#f9575e" stroke-width="1.25"/></svg><span style="transform:scaleX(0.9870)">afief bnpb</span></div>
<div class="nm" style="left:990.8px;top:348.45px"><span style="transform:scaleX(1.0246)">DP2IBN_Zulfian...</span></div>
<div class="lb" style="left:986.5px;top:387.53px;width:136.4px"><svg class="mic" width="20" height="21" viewBox="0 0 20 21"><rect x="6.9" y="3.8" width="6.3" height="9.6" rx="3.1" fill="#f9575e"/><path d="M6.6 10.2a3.5 3.5 0 0 0 7 0" fill="none" stroke="#f9575e" stroke-width="1"/><rect x="9.3" y="13" width="1.6" height="3.2" fill="#f9575e"/><rect x="7.3" y="15.9" width="5.6" height="1.6" rx=".4" fill="#f9575e"/><path d="M3.6 17.9L17.6 3.9" stroke="#292a2c" stroke-width="2.9"/><path d="M3 17.7L17.3 3.6" stroke="#f9575e" stroke-width="1.25"/></svg><span style="transform:scaleX(0.9324)">DP2IBN_Zulfiandri</span></div>
<div class="av" style="left:1204.5px;top:324.33px"><svg width="77" height="77" viewBox="0 0 77 77"><defs><linearGradient id="bl1" x1="0" y1="0" x2="0" y2="1"><stop offset="0" stop-color="#2267e2"/><stop offset=".3" stop-color="#0f4fd3"/><stop offset=".6" stop-color="#1253d4"/><stop offset=".82" stop-color="#2f7eea"/><stop offset="1" stop-color="#1f65e8"/></linearGradient><radialGradient id="bl2" cx=".6" cy=".8" r=".5" gradientTransform="translate(0 .5) scale(1 .35)"><stop offset="0" stop-color="#58a8f8" stop-opacity=".9"/><stop offset="1" stop-color="#58a8f8" stop-opacity="0"/></radialGradient><filter id="b3"><feGaussianBlur stdDeviation=".9"/></filter></defs>
<rect width="77" height="77" fill="url(#bl1)"/><rect width="77" height="77" fill="url(#bl2)"/>
<path d="M2 11c18 14 40 26 75 29" fill="none" stroke="#5a9cf0" stroke-width="1.300" opacity=".75" filter="url(#b3)"/>
<path d="M0 42c20 8 45 14 77 15" fill="none" stroke="#3f82ea" stroke-width="3" opacity=".4" filter="url(#b3)"/></svg></div>
<div class="lb" style="left:1158.5px;top:387.53px;width:100.0px"><svg class="mic" width="20" height="21" viewBox="0 0 20 21"><rect x="6.9" y="3.8" width="6.3" height="9.6" rx="3.1" fill="#f9575e"/><path d="M6.6 10.2a3.5 3.5 0 0 0 7 0" fill="none" stroke="#f9575e" stroke-width="1"/><rect x="9.3" y="13" width="1.6" height="3.2" fill="#f9575e"/><rect x="7.3" y="15.9" width="5.6" height="1.6" rx=".4" fill="#f9575e"/><path d="M3.6 17.9L17.6 3.9" stroke="#292a2c" stroke-width="2.9"/><path d="M3 17.7L17.3 3.6" stroke="#f9575e" stroke-width="1.25"/></svg><span style="transform:scaleX(0.9600)">Hesthy Widi</span></div>
<div class="av" style="left:515.5px;top:421.50px"><div style="width:77px;height:77px;background:#8c6d62;position:relative"><span style="position:absolute;left:0;top:0;width:77px;text-align:center;font-size:41px;line-height:79px;color:#fff">F</span></div></div>
<div class="lb" style="left:470px;top:484.70px;width:169.4px"><svg class="mic" width="20" height="21" viewBox="0 0 20 21"><rect x="6.9" y="3.8" width="6.3" height="9.6" rx="3.1" fill="#f9575e"/><path d="M6.6 10.2a3.5 3.5 0 0 0 7 0" fill="none" stroke="#f9575e" stroke-width="1"/><rect x="9.3" y="13" width="1.6" height="3.2" fill="#f9575e"/><rect x="7.3" y="15.9" width="5.6" height="1.6" rx=".4" fill="#f9575e"/><path d="M3.6 17.9L17.6 3.9" stroke="#292a2c" stroke-width="2.9"/><path d="M3 17.7L17.3 3.6" stroke="#f9575e" stroke-width="1.25"/></svg><span style="transform:scaleX(0.8802)">DP2IBN_Frilia Elfani Pu...</span></div>
<div class="av" style="left:687.7px;top:421.50px"><svg width="77" height="77" viewBox="0 0 77 77"><rect width="77" height="77" fill="#a0c2fb"/><circle cx="38" cy="29.600" r="14.300" fill="#4573df"/><path d="M13.800 77V63c0-9 12-14.200 24.400-14.200S62.800 54 62.800 63v14z" fill="#4573df"/></svg></div>
<div class="lb" style="left:642px;top:484.70px;width:136.6px"><svg class="mic" width="20" height="21" viewBox="0 0 20 21"><rect x="6.9" y="3.8" width="6.3" height="9.6" rx="3.1" fill="#f9575e"/><path d="M6.6 10.2a3.5 3.5 0 0 0 7 0" fill="none" stroke="#f9575e" stroke-width="1"/><rect x="9.3" y="13" width="1.6" height="3.2" fill="#f9575e"/><rect x="7.3" y="15.9" width="5.6" height="1.6" rx=".4" fill="#f9575e"/><path d="M3.6 17.9L17.6 3.9" stroke="#292a2c" stroke-width="2.9"/><path d="M3 17.7L17.3 3.6" stroke="#f9575e" stroke-width="1.25"/></svg><span style="transform:scaleX(0.9235)">DKKN_Agus Yudhi</span></div>
<div class="nm" style="left:858.8px;top:445.35px"><span style="transform:scaleX(0.9801)">Supriyati</span></div>
<div class="lb" style="left:814px;top:484.70px;width:80.0px"><svg class="mic" width="20" height="21" viewBox="0 0 20 21"><rect x="6.9" y="3.8" width="6.3" height="9.6" rx="3.1" fill="#f9575e"/><path d="M6.6 10.2a3.5 3.5 0 0 0 7 0" fill="none" stroke="#f9575e" stroke-width="1"/><rect x="9.3" y="13" width="1.6" height="3.2" fill="#f9575e"/><rect x="7.3" y="15.9" width="5.6" height="1.6" rx=".4" fill="#f9575e"/><path d="M3.6 17.9L17.6 3.9" stroke="#292a2c" stroke-width="2.9"/><path d="M3 17.7L17.3 3.6" stroke="#f9575e" stroke-width="1.25"/></svg><span style="transform:scaleX(0.9492)">Supriyati</span></div>
<div class="nm" style="left:994.8px;top:445.35px"><span style="transform:scaleX(0.9463)">BHKK_Surachmat</span></div>
<div class="lb" style="left:986.5px;top:484.70px;width:130.9px"><svg class="mic" width="20" height="21" viewBox="0 0 20 21"><rect x="6.9" y="3.8" width="6.3" height="9.6" rx="3.1" fill="#f9575e"/><path d="M6.6 10.2a3.5 3.5 0 0 0 7 0" fill="none" stroke="#f9575e" stroke-width="1"/><rect x="9.3" y="13" width="1.6" height="3.2" fill="#f9575e"/><rect x="7.3" y="15.9" width="5.6" height="1.6" rx=".4" fill="#f9575e"/><path d="M3.6 17.9L17.6 3.9" stroke="#292a2c" stroke-width="2.9"/><path d="M3 17.7L17.3 3.6" stroke="#f9575e" stroke-width="1.25"/></svg><span style="transform:scaleX(0.9031)">BHKK_Surachmat</span></div>
<div class="av" style="left:1204.5px;top:421.50px"><svg width="77" height="77" viewBox="0 0 77 77"><defs><filter id="b6"><feGaussianBlur stdDeviation=".7"/></filter><linearGradient id="ef1" x1="0" y1="0" x2="1" y2="1"><stop offset="0" stop-color="#c96a2e"/><stop offset=".5" stop-color="#c66528"/><stop offset="1" stop-color="#b95a22"/></linearGradient></defs>
<rect width="77" height="77" fill="url(#ef1)"/>
<g filter="url(#b6)">
<path d="M13 66c3-9 8-19 14-22l10-6l12-6c8 3 14 8 17 13c1 10 0 22-4 32H20z" fill="#17171a"/>
<path d="M31 38l18-8l-2 6c-6 5-10 14-13 27l-2 2c0-10 0-18 -1-27z" fill="#f1f0f2"/>
<ellipse cx="38" cy="22" rx="10" ry="13" fill="#c98d6c" transform="rotate(-8 38 22)"/>
<path d="M28.500 13c2-6 9-9 15-7c4 2 6 6 5 11c-3-6-9-8-15-7z" fill="#1d1714"/>
<path d="M31 27c3 3 8 3 11-1c-1 4-8 6-11 1z" fill="#fff"/>
<path d="M30 18.500h4.500M38 17.500h4.500" stroke="#3a2218" stroke-width="1"/>
<path d="M42 65l7-3v4l-5 3z" fill="#c98058"/>
</g>
<circle cx="52" cy="4" r=".7" fill="#e8c8b0"/><circle cx="66" cy="11" r=".7" fill="#e8c8b0"/><circle cx="73" cy="25" r=".8" fill="#e8c8b0"/><circle cx="55" cy="24" r=".6" fill="#e8c8b0"/><circle cx="3" cy="49" r=".7" fill="#e8c8b0"/>
</svg></div>
<div class="lb" style="left:1158.5px;top:484.70px;width:80.4px"><svg class="mic" width="20" height="21" viewBox="0 0 20 21"><rect x="6.9" y="3.8" width="6.3" height="9.6" rx="3.1" fill="#f9575e"/><path d="M6.6 10.2a3.5 3.5 0 0 0 7 0" fill="none" stroke="#f9575e" stroke-width="1"/><rect x="9.3" y="13" width="1.6" height="3.2" fill="#f9575e"/><rect x="7.3" y="15.9" width="5.6" height="1.6" rx=".4" fill="#f9575e"/><path d="M3.6 17.9L17.6 3.9" stroke="#292a2c" stroke-width="2.9"/><path d="M3 17.7L17.3 3.6" stroke="#f9575e" stroke-width="1.25"/></svg><span style="transform:scaleX(0.9046)">Efa Rofiq</span></div>
<div class="nm" style="left:475.3px;top:542.25px"><span style="transform:scaleX(1.0198)">Inspektorat_sar...</span></div>
<div class="lb" style="left:470px;top:581.87px;width:154.8px"><svg class="mic" width="20" height="21" viewBox="0 0 20 21"><rect x="6.9" y="3.8" width="6.3" height="9.6" rx="3.1" fill="#f9575e"/><path d="M6.6 10.2a3.5 3.5 0 0 0 7 0" fill="none" stroke="#f9575e" stroke-width="1"/><rect x="9.3" y="13" width="1.6" height="3.2" fill="#f9575e"/><rect x="7.3" y="15.9" width="5.6" height="1.6" rx=".4" fill="#f9575e"/><path d="M3.6 17.9L17.6 3.9" stroke="#292a2c" stroke-width="2.9"/><path d="M3 17.7L17.3 3.6" stroke="#f9575e" stroke-width="1.25"/></svg><span style="transform:scaleX(0.9289)">Inspektorat_saraswati</span></div>
<div class="av" style="left:687.7px;top:518.67px"><div style="width:77px;height:77px;background:#c2175b;position:relative"><span style="position:absolute;left:0;top:0;width:77px;text-align:center;font-size:41px;line-height:79px;color:#fff">H</span></div></div>
<div class="lb" style="left:642px;top:581.87px;width:129.6px"><svg class="mic" width="20" height="21" viewBox="0 0 20 21"><rect x="6.9" y="3.8" width="6.3" height="9.6" rx="3.1" fill="#f9575e"/><path d="M6.6 10.2a3.5 3.5 0 0 0 7 0" fill="none" stroke="#f9575e" stroke-width="1"/><rect x="9.3" y="13" width="1.6" height="3.2" fill="#f9575e"/><rect x="7.3" y="15.9" width="5.6" height="1.6" rx=".4" fill="#f9575e"/><path d="M3.6 17.9L17.6 3.9" stroke="#292a2c" stroke-width="2.9"/><path d="M3 17.7L17.3 3.6" stroke="#f9575e" stroke-width="1.25"/></svg><span style="transform:scaleX(0.9362)">Bapeten_Hennny</span></div>
<div class="av" style="left:860.0px;top:518.67px"><svg width="77" height="77" viewBox="0 0 77 77"><defs><filter id="b7"><feGaussianBlur stdDeviation=".7"/></filter><linearGradient id="rz1" x1="0" y1="0" x2="1" y2=".25"><stop offset="0" stop-color="#fafafa"/><stop offset=".45" stop-color="#bdbdbd"/><stop offset=".8" stop-color="#ededed"/><stop offset="1" stop-color="#f6f6f6"/></linearGradient><linearGradient id="rz2" x1="0" y1="0" x2="0" y2="1"><stop offset="0" stop-color="#8a8a8a"/><stop offset="1" stop-color="#6a6a6a"/></linearGradient></defs>
<rect width="77" height="77" fill="#5a5a5a"/>
<g filter="url(#b7)">
<path d="M0 0h68L36 26H0z" fill="url(#rz1)"/>
<path d="M66 0h11v6L38 28l-2.500-2.500z" fill="#3a3a3a"/>
<path d="M77 6v71H37V28z" fill="url(#rz2)"/>
<path d="M0 26h37v51H0z" fill="#333"/>
<path d="M40 34c3-3 6-2 7 1c3-2 6-1 7 2c2-3 6-2 7 1c3 0 6 2 7 5c3-6 9-6 9-1v35H40z" fill="#262626"/>
<circle cx="54.500" cy="34.500" r="3.200" fill="#8e8e8e"/><circle cx="60.500" cy="41.500" r="3.600" fill="#a2a2a2"/><circle cx="72.500" cy="32.500" r="3.200" fill="#adadad"/><circle cx="72.500" cy="39.500" r="2.400" fill="#7d7d7d"/>
<circle cx="8.500" cy="38.500" r="3.600" fill="#7d7d7d"/><circle cx="15" cy="35" r="3.400" fill="#3c3c3c"/>
<path d="M2 77c0-17 6-25 16-29l8-4l10 3l5-3c3-6 4-12 7-10c3 2 3 10 2 17c-1 10-3 18-6 26z" fill="#262626"/>
<path d="M20 46l4.500 1l-2 14z" fill="#d8d8d8"/>
<path d="M21 35c3 3 9 3 12.500 0l-.5 8c-3.500 2.500-8 2.500-11.500 0z" fill="#6e6e6e"/>
<path d="M15.500 32.500c1-1.500 3-2 4.500-2c.5-5 3-9 7.500-9c4.500 0 8 3 8.500 8c2.500.5 4.500 1.500 5 3c-7 3-19 3-25.500 0z" fill="#4c4c4c"/>
<path d="M28 24c2-2.500 6-3 8-1c3 3 6 9 7 14l-4 2c-2-3-6-5-9-8z" fill="#7c7c7c"/>
</g></svg></div>
<div class="lb" style="left:814px;top:581.87px;width:104.5px"><svg class="mic" width="20" height="21" viewBox="0 0 20 21"><rect x="6.9" y="3.8" width="6.3" height="9.6" rx="3.1" fill="#f9575e"/><path d="M6.6 10.2a3.5 3.5 0 0 0 7 0" fill="none" stroke="#f9575e" stroke-width="1"/><rect x="9.3" y="13" width="1.6" height="3.2" fill="#f9575e"/><rect x="7.3" y="15.9" width="5.6" height="1.6" rx=".4" fill="#f9575e"/><path d="M3.6 17.9L17.6 3.9" stroke="#292a2c" stroke-width="2.9"/><path d="M3 17.7L17.3 3.6" stroke="#f9575e" stroke-width="1.25"/></svg><span style="transform:scaleX(0.9240)">Rizki_Hukum</span></div>
<div class="av" style="left:1032.3px;top:518.67px"><svg width="77" height="77" viewBox="0 0 77 77"><defs><radialGradient id="sn1" cx=".58" cy=".5" r=".72"><stop offset="0" stop-color="#676767"/><stop offset=".55" stop-color="#565656"/><stop offset="1" stop-color="#383838"/></radialGradient><filter id="nz" x="0" y="0" width="1" height="1" color-interpolation-filters="sRGB"><feTurbulence type="fractalNoise" baseFrequency=".3" numOctaves="2" seed="4"/><feColorMatrix values="0 0 0 0 .2  0 0 0 0 .2  0 0 0 0 .2  1.500 1.500 0 0 -1.150"/></filter></defs>
<rect width="77" height="77" fill="url(#sn1)"/><rect width="77" height="77" filter="url(#nz)" opacity=".55"/></svg></div>
<div class="lb" style="left:986.5px;top:581.87px;width:169.5px"><svg class="mic" width="20" height="21" viewBox="0 0 20 21"><rect x="6.9" y="3.8" width="6.3" height="9.6" rx="3.1" fill="#f9575e"/><path d="M6.6 10.2a3.5 3.5 0 0 0 7 0" fill="none" stroke="#f9575e" stroke-width="1"/><rect x="9.3" y="13" width="1.6" height="3.2" fill="#f9575e"/><rect x="7.3" y="15.9" width="5.6" height="1.6" rx=".4" fill="#f9575e"/><path d="M3.6 17.9L17.6 3.9" stroke="#292a2c" stroke-width="2.9"/><path d="M3 17.7L17.3 3.6" stroke="#f9575e" stroke-width="1.25"/></svg><span style="transform:scaleX(0.9600)">Seno Aribowo - Keme...</span></div>
<div class="nm" style="left:1170.0px;top:542.25px"><span style="transform:scaleX(0.9753)">BRIN, Dicky Tri J</span></div>
<div class="lb" style="left:1158.5px;top:581.87px;width:122.1px"><svg class="mic" width="20" height="21" viewBox="0 0 20 21"><rect x="6.9" y="3.8" width="6.3" height="9.6" rx="3.1" fill="#f9575e"/><path d="M6.6 10.2a3.5 3.5 0 0 0 7 0" fill="none" stroke="#f9575e" stroke-width="1"/><rect x="9.3" y="13" width="1.6" height="3.2" fill="#f9575e"/><rect x="7.3" y="15.9" width="5.6" height="1.6" rx=".4" fill="#f9575e"/><path d="M3.6 17.9L17.6 3.9" stroke="#292a2c" stroke-width="2.9"/><path d="M3 17.7L17.3 3.6" stroke="#f9575e" stroke-width="1.25"/></svg><span style="transform:scaleX(0.8867)">BRIN, Dicky Tri J</span></div>
<div class="abs" style="left:654px;top:724px;width:724px;height:1px;background:#0a0c0d"></div>
<div class="abs" style="left:0;top:724px;width:654px;height:1px;background:#383838"></div>
<div class="abs" style="left:0;top:725px;width:1378px;height:52px;background:#1c1c1c;border-top:1px solid #3b3b3b;box-sizing:border-box"></div>
<!-- weather -->
<svg class="abs" style="left:20px;top:736px" width="30" height="30" viewBox="0 0 30 30"><defs><linearGradient id="wsun" x1="0" y1="0" x2="1" y2="1"><stop offset="0" stop-color="#fcc21b"/><stop offset="1" stop-color="#f0780f"/></linearGradient><linearGradient id="wcl" x1="0" y1="0" x2="0" y2="1"><stop offset="0" stop-color="#a9c7f2"/><stop offset="1" stop-color="#e6effb"/></linearGradient></defs>
<circle cx="13.6" cy="13.3" r="10.600" fill="url(#wsun)"/>
<path d="M8.800 27a4.200 4.200 0 0 1-.6-8.300a5.200 5.200 0 0 1 9.800-1.700a4.300 4.300 0 0 1 5.400 3a3.600 3.600 0 0 1-.7 7z" fill="url(#wcl)"/></svg>
<div class="abs" style="left:54.5px;top:735.5px;font-size:12.8px;line-height:14px;color:#f4f4f4;white-space:pre;transform-origin:0 50%" id="wt1">28°C</div>
<div class="abs" style="left:54.5px;top:753.2px;font-size:12.6px;line-height:14px;color:#cfcfcf;white-space:pre;transform-origin:0 50%" id="wt2">Sebagian cerah</div>
<!-- start -->
<svg class="abs" style="left:260px;top:738px" width="27" height="27" viewBox="0 0 27 27"><defs><linearGradient id="wlg" x1="0" y1="0" x2="1" y2="1"><stop offset="0" stop-color="#7bd6fb"/><stop offset=".5" stop-color="#35bdf8"/><stop offset="1" stop-color="#0f98f2"/></linearGradient></defs>
<path d="M2.4.8h10.900v12.100H.9V2.300A1.500 1.500 0 0 1 2.400.8zM14.300.8h10.400a1.500 1.500 0 0 1 1.500 1.500v10.600H14.300zM.9 13.900h12.400v12.200H2.400a1.500 1.500 0 0 1-1.500-1.500zM14.300 13.900h11.900v10.700a1.500 1.500 0 0 1-1.500 1.500H14.300z" fill="url(#wlg)"/></svg>
<!-- search -->
<div class="abs" style="left:301.500px;top:734.600px;width:234.500px;height:33.200px;border-radius:16.600px;background:#f3f3f3"></div>
<svg class="abs" style="left:310px;top:740px" width="22" height="22" viewBox="0 0 22 22"><circle cx="10.200" cy="10.200" r="5.900" fill="#eee" stroke="#222" stroke-width="1.400"/><path d="M14.500 14.700l3.600 3.800" stroke="#222" stroke-width="1.700" stroke-linecap="round"/></svg>
<div class="abs" style="left:340.800px;top:742px;font-size:15px;line-height:18px;color:#626262;white-space:pre;transform-origin:0 50%;transform:scaleX(.97)">Search</div>
<!-- foxes -->
<svg class="abs" style="left:484px;top:736px" width="46" height="31" viewBox="0 0 46 31"><defs><linearGradient id="fx" x1="0" y1="0" x2="1" y2="1"><stop offset="0" stop-color="#f7b23a"/><stop offset="1" stop-color="#ea860f"/></linearGradient><filter id="fxb"><feGaussianBlur stdDeviation=".35"/></filter></defs>
<g filter="url(#fxb)">
<ellipse cx="22" cy="28" rx="19" ry="1.800" fill="#c9a530" opacity=".8"/><ellipse cx="36" cy="28.300" rx="6" ry="1.300" fill="#5a9a2a"/>
<path d="M23 2c3-1.500 6-1 8 .5c-3 .5-4.500 3-4.500 6c0 3 1 6 .5 9l-3.500 1c1-5-2.500-9-2.500-12c0-2 .8-3.500 2-4.500z" fill="url(#fx)"/>
<path d="M1.500 2.500l3 3c1.500-.6 3-.6 4.500 0l2.500-3.300l.8 5c.5 2-.3 4-2 5l2.500 3c2 2 5 4 6 8l-.5 5h-2.500l-1-4l-3.500-2l-.5 6h-2.200l-.5-8c-1.500-3-2-6-2-8c-2-1-3.500-3-3.500-5z" fill="url(#fx)"/>
<path d="M5 10l2 3l2-3z" fill="#fff3dc"/><circle cx="4.900" cy="8.200" r=".7" fill="#222"/><circle cx="9" cy="8.200" r=".7" fill="#222"/><circle cx="7" cy="12.600" r=".6" fill="#222"/>
<path d="M31 9c2-4 6-5.500 10.500-5c-3 1.500-5 4-4.500 8c.5 4 3.500 7 3.500 11c0 3-2 5-5 5.500H22l-2-3c-1-4 1-7 5-7.500l6 1c2 .5 3.500 0 3.500-2c0-3-4.500-5-3.500-8z" fill="url(#fx)"/>
<path d="M14.500 6.500l2.500 3c1.400-.5 3-.5 4.400 0l2.300-3l.8 4.500c.6 2.500-.5 4.500-2.500 5.500c-1.500 1-3.500 1-5 0c-2-1-3-3-2.700-5.500z" fill="#f2a02a"/>
<path d="M17.200 14.500l2 2.300l2-2.300z" fill="#fff3dc"/><circle cx="17.300" cy="12.300" r=".7" fill="#222"/><circle cx="21.300" cy="12.300" r=".7" fill="#222"/><circle cx="19.200" cy="16.500" r=".6" fill="#222"/>
<path d="M20 20c3-1 6 0 7 3l1 5h-2.500l-1.500-4z" fill="#ef951c"/>
</g></svg>
<!-- task view -->
<svg class="abs" style="left:549px;top:737px" width="29" height="28" viewBox="0 0 29 28"><defs><linearGradient id="tv1" x1="0" y1="0" x2="1" y2="1"><stop offset="0" stop-color="#fff"/><stop offset="1" stop-color="#cfcfcf"/></linearGradient></defs>
<rect x="1" y="9" width="19.600" height="16.800" rx="1.500" fill="#666"/><rect x="7.500" y="1.700" width="19.600" height="18.100" rx="1.800" fill="url(#tv1)"/><rect x="7.500" y="9" width="13.100" height="10.800" fill="#9b9b9b" opacity=".55"/></svg>
<!-- file explorer -->
<svg class="abs" style="left:596px;top:738px" width="29" height="27" viewBox="0 0 29 27"><defs><linearGradient id="fe1" x1="0" y1="0" x2="0" y2="1"><stop offset="0" stop-color="#ffd968"/><stop offset="1" stop-color="#f7bb1e"/></linearGradient><linearGradient id="fe2" x1="0" y1="0" x2="0" y2="1"><stop offset="0" stop-color="#1b8fe3"/><stop offset="1" stop-color="#1571c4"/></linearGradient></defs>
<path d="M1.100 3.300a1.500 1.500 0 0 1 1.500-1.500h6.500l2.600 3.400H1.100z" fill="#e5a50b"/>
<path d="M1.100 4.700h24.600a1.500 1.500 0 0 1 1.500 1.500v18.500H1.100z" fill="url(#fe1)"/>
<path d="M6 24.700v-5.600a2.200 2.200 0 0 1 2.200-2.200h12.400a2.200 2.200 0 0 1 2.200 2.200v5.600z" fill="url(#fe2)"/><rect x="8.800" y="20.200" width="11.200" height="1.500" rx=".7" fill="#0f5aa6"/></svg>
<div class="abs" style="left:607.200px;top:768.500px;width:6.800px;height:3px;border-radius:1.500px;background:#9a9a9a"></div>
<!-- copilot -->
<svg class="abs" style="left:646px;top:739px" width="24" height="24" viewBox="0 0 24 24"><defs><linearGradient id="cp1" x1="0" y1="0" x2="0" y2="1"><stop offset="0" stop-color="#1d8ef0"/><stop offset=".35" stop-color="#36c3c0"/><stop offset=".7" stop-color="#e8d33a"/><stop offset="1" stop-color="#f4b232"/></linearGradient><linearGradient id="cp2" x1="0" y1="0" x2="0" y2="1"><stop offset="0" stop-color="#b85af2"/><stop offset=".5" stop-color="#f0609a"/><stop offset="1" stop-color="#fb8a3c"/></linearGradient><filter id="cpb"><feGaussianBlur stdDeviation=".3"/></filter></defs>
<g filter="url(#cpb)"><path d="M8.500 2.800h5.800c1.500 0 2.300 1 1.900 2.500L13.500 14c-.5 1.500-1.600 2.300-3 2.300H4.300c-1.600 0-2.600-1.200-2.100-2.800l2.700-8.200c.5-1.700 1.800-2.500 3.600-2.500z" fill="url(#cp1)"/>
<path d="M13.600 7.700h6.200c1.600 0 2.400 1.200 1.900 2.700l-2.600 8c-.5 1.700-1.800 2.700-3.500 2.700H9.800c-1.500 0-2.300-1.100-1.800-2.600l2.700-8.200c.5-1.600 1.500-2.600 2.900-2.600z" fill="url(#cp2)"/>
<path d="M13.500 3.200c1.800 0 2.600 1.200 2.300 2.800l-.6 1.800l-2.200 0z" fill="#1746c8"/><path d="M10.300 20.700c-1.700 0-2.600-1.300-2.200-2.800l.5-1.600h2.600z" fill="#f0552e"/>
<path d="M12.800 7.900L10 16.200" stroke="#1c1c1c" stroke-width="1.900"/></g></svg>
<!-- edge -->
<svg class="abs" style="left:691.700px;top:737.500px" width="26.700" height="26.700" viewBox="0 0 26.700 26.700"><defs><linearGradient id="ed1" x1="0" y1="0" x2="1" y2="0"><stop offset="0" stop-color="#2a9fe6"/><stop offset=".5" stop-color="#33bfc4"/><stop offset="1" stop-color="#72dc4a"/></linearGradient><linearGradient id="ed2" x1="0" y1="0" x2=".6" y2="1"><stop offset="0" stop-color="#2ba0e6"/><stop offset="1" stop-color="#0f62bd"/></linearGradient><filter id="edb"><feGaussianBlur stdDeviation=".25"/></filter></defs>
<g filter="url(#edb)"><circle cx="13.350" cy="13.350" r="13.150" fill="url(#ed2)"/>
<path d="M7.600 11.500C6.200 17 8.800 23.600 15 25.600c4 .8 8-2 10-6c-3 2-8 2-10.500 0c-3-2-3.700-5-2.500-7.500z" fill="#0c4796" opacity=".85"/>
<path d="M.25 13.700A13.150 13.150 0 0 1 26.450 12c.2 3.500-.9 6.500-2.900 8c-2.500.5-5-.5-6-2c.8-1.500 1-3.500 0-5.500c-1.200-2.200-3.700-3.200-6.500-2.700C6.500 10.500 3 12.600.25 13.700z" fill="url(#ed1)"/>
<ellipse cx="14.300" cy="14.600" rx="3.500" ry="3.900" fill="#1d1d1d"/>
<path d="M15.500 17.300c3 2.200 7.500 2.400 10.300 1.100c-2.300 2.700-7.600 2.800-10.800.2z" fill="#1d1d1d"/></g></svg>
<!-- zoom (active) -->
<div class="abs" style="left:731px;top:729.500px;width:42.500px;height:43.200px;border-radius:5px;background:#2c2c2c;border:1px solid #333;box-sizing:border-box"></div>
<svg class="abs" style="left:739px;top:738px" width="27" height="27" viewBox="0 0 27 27"><defs><radialGradient id="zm1" cx=".4" cy=".3" r=".8"><stop offset="0" stop-color="#1d6dff"/><stop offset="1" stop-color="#0b4fe8"/></radialGradient></defs>
<path d="M13.500.4c7.500 0 13.100 2.600 13.100 13.100S21 26.600 13.500 26.600S.4 24 .4 13.500S6 .4 13.500.4z" fill="url(#zm1)"/>
<g transform="translate(13.400 13.900) scale(.87) translate(-14.400 -13.750)" fill="none" stroke="#fff" stroke-width="1.250" stroke-linejoin="round" stroke-linecap="round"><path d="M4.300 11.900h3.600l-3.600 3.700h3.700"/><ellipse cx="11.500" cy="13.750" rx="1.900" ry="1.900"/><ellipse cx="16.700" cy="13.750" rx="1.900" ry="1.900"/><path d="M20 15.700v-2.300a1.350 1.350 0 0 1 2.700 0v2.300M22.700 13.400a1.350 1.350 0 0 1 2.700 0v2.300" transform="translate(-.9 0)"/></g></svg>
<div class="abs" style="left:744px;top:768.400px;width:16.800px;height:3.300px;border-radius:1.650px;background:#4cc2ff"></div>
<!-- chrome x3 -->
<svg width="0" height="0" style="position:absolute"><defs><g id="chrome"><circle cx="13" cy="13" r="13" fill="#fff"/>
<path d="M13 13L1.740 6.500A13 13 0 0 1 24.260 6.500z" fill="#e33b2e"/>
<path d="M13 13L24.260 6.500A13 13 0 0 1 13 26z" fill="#fbc116"/>
<path d="M13 13L13 26A13 13 0 0 1 1.740 6.500z" fill="#2da94f"/>
<path d="M13 6.900h11.030l-5.700 9.900z" fill="#e33b2e"/><path d="M18.300 16.050L12.800 25.600L7.720 16.050z" fill="#fbc116" transform="rotate(0)"/><path d="M7.720 16.050L2.200 6.500L13 6.900z" fill="#2da94f"/>
<circle cx="13" cy="13" r="6.100" fill="#fff"/><circle cx="13" cy="13" r="4.800" fill="#3a7cf0"/></g></defs></svg>
<svg class="abs" style="left:786.900px;top:738px" width="26.200" height="26.200" viewBox="0 0 26 26"><use href="#chrome"/></svg>
<svg class="abs" style="left:881.700px;top:738px" width="26.200" height="26.200" viewBox="0 0 26 26"><use href="#chrome"/></svg>
<svg class="abs" style="left:1023.900px;top:738px" width="26.200" height="26.200" viewBox="0 0 26 26"><use href="#chrome"/></svg>
<div class="abs" style="left:895.200px;top:732.500px;width:17.700px;height:17.700px;border-radius:50%;background:#7b1fa2;color:#e8d8f0;font-size:11.500px;line-height:17.700px;text-align:center">D</div>
<div class="abs" style="left:1037.200px;top:732.500px;width:17.700px;height:17.700px;border-radius:50%;background:#0b57a4;color:#cfe0f2;font-size:11.500px;line-height:17.700px;text-align:center">D</div>
<div class="abs" style="left:891.200px;top:768.500px;width:6.800px;height:3px;border-radius:1.500px;background:#9a9a9a"></div>
<div class="abs" style="left:938.200px;top:768.500px;width:6.800px;height:3px;border-radius:1.500px;background:#9a9a9a"></div>
<div class="abs" style="left:985.700px;top:768.500px;width:6.800px;height:3px;border-radius:1.500px;background:#9a9a9a"></div>
<div class="abs" style="left:1033.200px;top:768.500px;width:6.800px;height:3px;border-radius:1.500px;background:#9a9a9a"></div>
<!-- ccleaner -->
<svg class="abs" style="left:834px;top:738px" width="27" height="26" viewBox="0 0 27 26"><defs><filter id="ccb"><feGaussianBlur stdDeviation=".35"/></filter></defs><g filter="url(#ccb)">
<circle cx="14.800" cy="12.700" r="10.900" fill="#c4140f"/><circle cx="14.800" cy="12.700" r="8" fill="#e04b42"/>
<path d="M19.500 8.500a5.800 5.800 0 1 0 0 8.500l-2-2a3 3 0 1 1 0-4.500z" fill="#fff"/>
<path d="M10.800 5.500l1.600.6l-2.200 8l-1.800-.6z" fill="#2f7fd6"/>
<path d="M6.500 13l5 2l-2.500 6c-2.500.5-5.500-.5-7-2z" fill="#eec79a"/><path d="M3 18.500l5 2M4.500 16.500l5 2" stroke="#cfa06a" stroke-width=".7"/></g></svg>
<!-- word 2010 -->
<svg class="abs" style="left:929px;top:737.500px" width="26" height="26" viewBox="0 0 26 26"><defs><linearGradient id="wd1" x1="0" y1="0" x2="1" y2="1"><stop offset="0" stop-color="#e9f1fb"/><stop offset="1" stop-color="#8fb3e6"/></linearGradient><filter id="wdb"><feGaussianBlur stdDeviation=".3"/></filter></defs><g filter="url(#wdb)">
<path d="M4 .5h21v24.300H.5V4z" fill="url(#wd1)"/><path d="M.5 24.800h24.500" stroke="#2a5db0" stroke-width="1"/>
<path d="M2.500 19.500l19-6.500l3.500 1.500v10H.8z" fill="#fff"/><path d="M14 14.500l10.500-1l.5 8z" fill="#f4f7fc"/>
<text x="2.200" y="16.300" font-family="Liberation Sans,sans-serif" font-weight="700" font-size="16.500" fill="#1b57b8" stroke="#1b57b8" stroke-width=".8">W</text>
<path d="M20.500 3.500v9" stroke="#4a7fd0" stroke-width="1.500"/></g></svg>
<!-- acrobat -->
<svg class="abs" style="left:977px;top:738.200px" width="25" height="24" viewBox="0 0 25 24"><rect x=".2" y=".2" width="24.400" height="23.500" rx="3.200" fill="#b30b00"/>
<path d="M5.300 18.600c1.200-3.200 6.500-5.200 12.500-4.600c2 .3 2 1.700.3 1.600c-4-.3-8-3.500-7.200-9.300c.2-1.600 1.600-1.700 1.700 0c.3 4.500-2.500 10-5.700 12.800c-.9.800-2 .6-1.600-.5z" fill="none" stroke="#fff" stroke-width="1.250" stroke-linejoin="round"/></svg>
<!-- tray -->
<svg class="abs" style="left:1130px;top:738px" width="150" height="26" viewBox="0 0 150 26">
<path d="M4.300 15.600l5.800-5.900l5.800 5.900" fill="none" stroke="#fff" stroke-width="1.400" stroke-linecap="round" stroke-linejoin="round"/>
<g fill="none" stroke="#60c4ee" stroke-width="1.150" stroke-linecap="round" stroke-linejoin="round"><rect x="35.700" y="4.400" width="4.400" height="8.800" rx="2.200"/><path d="M33.400 10.500a4.500 4.500 0 0 0 9 0M37.900 15.100v3"/><path d="M55.500 10.500L44.600 14.900l4.700 1.400l1.700 4.700z"/></g>
<g fill="none" stroke="#fff" stroke-width="1.250" stroke-linecap="round"><path d="M70.700 11.300a11.300 11.300 0 0 1 15.600 0" opacity=".35"/><path d="M72.900 13.900a8 8 0 0 1 11.200 0"/><path d="M75.300 16.500a4.600 4.600 0 0 1 6.400 0"/><circle cx="78.500" cy="18.600" r=".9" fill="#fff" stroke="none"/></g>
<g fill="none" stroke="#fff" stroke-width="1.150" stroke-linejoin="round" stroke-linecap="round"><path d="M96.700 11h2.600l3.700-3.500v12l-3.700-3.500h-2.600z"/><path d="M105.300 10.600a4 4 0 0 1 0 5.800M107.700 8.400a7.200 7.200 0 0 1 0 10.200M110.100 6.400a10.200 10.200 0 0 1 0 14.200"/></g>
<rect x="122" y="8.200" width="19.600" height="10.600" rx="3" fill="none" stroke="#fff" stroke-width="1.300"/><path d="M142.700 11.500v4" stroke="#fff" stroke-width="1.600" stroke-linecap="round"/><rect x="124.300" y="10.500" width="10.500" height="6" rx="1.200" fill="#7fd37f"/>
<path d="M132.800 3l-4.600 7.600h3.300l-1.200 5.200l4.800-7.600h-3.300z" fill="#fff" stroke="#1c1c1c" stroke-width=".9"/>
</svg>
<div class="abs" style="left:1280px;top:735.800px;width:77.500px;text-align:right;font-size:12.600px;line-height:14px;color:#f4f4f4;white-space:pre">09:27</div>
<div class="abs" style="left:1280px;top:752.800px;width:77.500px;text-align:right;font-size:12.600px;line-height:14px;color:#f4f4f4;white-space:pre;letter-spacing:.45px">10/04/2026</div>

</body></html>
